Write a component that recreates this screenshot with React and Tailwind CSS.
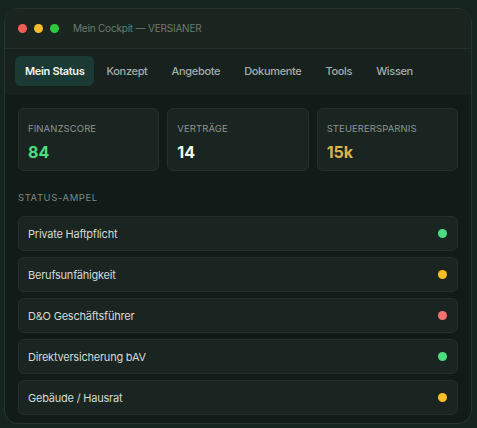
import React from 'react';

const tabs = ['Mein Status', 'Konzept', 'Angebote', 'Dokumente', 'Tools', 'Wissen'];

const stats = [
  { label: 'Finanzscore', value: '84', color: 'text-[#4ade80]' },
  { label: 'Verträge', value: '14', color: 'text-[#f3f5f4]' },
  { label: 'Steuerersparnis', value: '15k', color: 'text-[#d9b44a]' },
];

const ampel = [
  { name: 'Private Haftpflicht', dot: 'bg-[#4ade80]' },
  { name: 'Berufsunfähigkeit', dot: 'bg-[#fbbf24]' },
  { name: 'D&O Geschäftsführer', dot: 'bg-[#f87171]' },
  { name: 'Direktversicherung bAV', dot: 'bg-[#4ade80]' },
  { name: 'Gebäude / Hausrat', dot: 'bg-[#fbbf24]' },
];

const App = () => {
  return (
    <div
      className="w-[477px] h-[428px] overflow-hidden bg-[#16241f] pt-2 pl-1"
      style={{ fontFamily: 'Inter, "Noto Sans", sans-serif' }}
    >
      <div className="w-[468px] h-[416px] rounded-[14px] border border-[#24342e] bg-[#111b17] overflow-hidden">
        {/* title bar */}
        <div className="h-10 flex items-center gap-[7px] pl-[13px] bg-[#1a2520] border-b border-[#24322c]">
          <span className="w-[9px] h-[9px] rounded-full bg-[#f05f57]" />
          <span className="w-[9px] h-[9px] rounded-full bg-[#f7bc2e]" />
          <span className="w-[9px] h-[9px] rounded-full bg-[#2fc840]" />
          <span className="ml-[7px] text-[10px] tracking-[-0.02em] text-[#6b7a74]">Mein Cockpit — VERSIANER</span>
        </div>

        {/* tabs */}
        <div className="h-[46px] flex items-start pt-[7px] pl-[10px] bg-[#17211d] border-b border-[#16201c]">
          {tabs.map((t, i) => (
            <div
              key={t}
              className={
                i === 0
                  ? 'h-[30px] px-[10px] flex items-center rounded-md bg-[#1c3a34] text-[#f1f4f2] font-semibold text-[11px] tracking-[-0.03em]'
                  : 'h-[30px] px-[12px] flex items-center text-[#a3aea9] text-[11px] font-medium tracking-[-0.03em]'
              }
            >
              {t}
            </div>
          ))}
        </div>

        <div className="px-[13px] pt-[13px]">
          <div className="grid grid-cols-3 gap-2">
            {stats.map((s) => (
              <div
                key={s.label}
                className="h-[63px] rounded-md border border-[#243129] bg-[#1a2521] px-[9px] pt-[13px]"
              >
                <div className="text-[9.5px] uppercase tracking-[0.01em] text-[#8a968f]">{s.label}</div>
                <div className={`mt-[6px] text-[16px] font-bold leading-5 ${s.color}`}>{s.value}</div>
              </div>
            ))}
          </div>

          <div className="mt-[20px] text-[9.5px] uppercase tracking-[0.06em] text-[#7d8a84]">Status-Ampel</div>

          <div className="mt-[11px] flex flex-col gap-[6px]">
            {ampel.map((a) => (
              <div
                key={a.name}
                className="h-[35px] flex items-center justify-between rounded-md border border-[#223029] bg-[#1a2521] pl-[9px] pr-[10px]"
              >
                <span className="text-[11px] tracking-[-0.02em] text-[#d3dad6]">{a.name}</span>
                <span className={`w-[9px] h-[9px] rounded-full ${a.dot}`} />
              </div>
            ))}
          </div>
        </div>
      </div>
    </div>
  );
};

export default App;
